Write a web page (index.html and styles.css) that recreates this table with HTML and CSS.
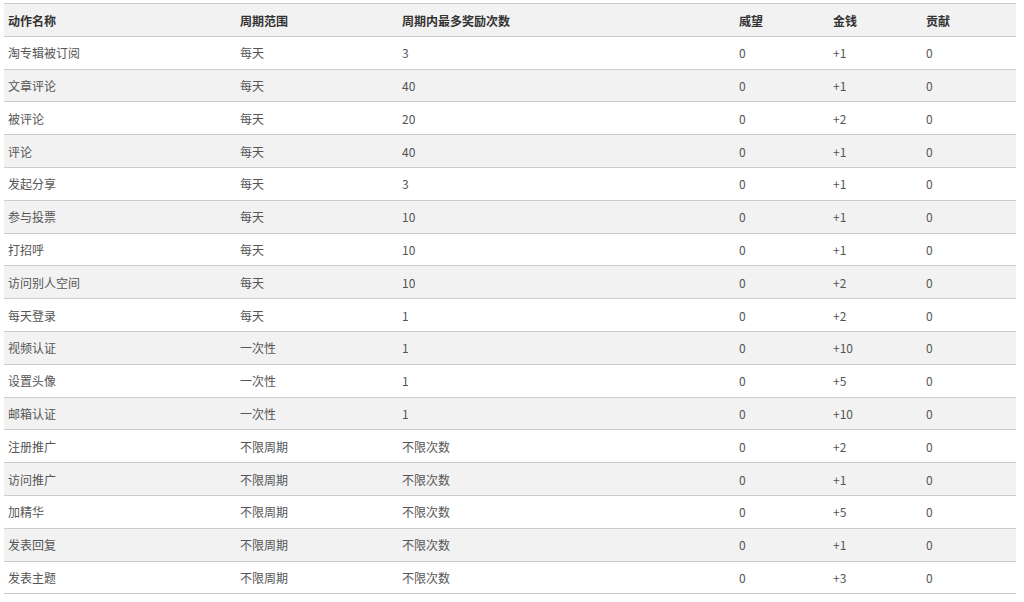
FILE: index.html
```html
<!DOCTYPE html>
<html lang="zh-CN">
<head>
<meta charset="utf-8">
<title>积分规则</title>
<link rel="stylesheet" href="styles.css">
</head>
<body>
<div class="wrap">
<table class="credits">
<colgroup>
<col class="c1"><col class="c2"><col class="c3"><col class="c4"><col class="c5"><col class="c6">
</colgroup>
<thead>
<tr><th>动作名称</th><th>周期范围</th><th>周期内最多奖励次数</th><th>威望</th><th>金钱</th><th>贡献</th></tr>
</thead>
<tbody>
<tr><td>淘专辑被订阅</td><td>每天</td><td>3</td><td>0</td><td>+1</td><td>0</td></tr>
<tr><td>文章评论</td><td>每天</td><td>40</td><td>0</td><td>+1</td><td>0</td></tr>
<tr><td>被评论</td><td>每天</td><td>20</td><td>0</td><td>+2</td><td>0</td></tr>
<tr><td>评论</td><td>每天</td><td>40</td><td>0</td><td>+1</td><td>0</td></tr>
<tr><td>发起分享</td><td>每天</td><td>3</td><td>0</td><td>+1</td><td>0</td></tr>
<tr><td>参与投票</td><td>每天</td><td>10</td><td>0</td><td>+1</td><td>0</td></tr>
<tr><td>打招呼</td><td>每天</td><td>10</td><td>0</td><td>+1</td><td>0</td></tr>
<tr><td>访问别人空间</td><td>每天</td><td>10</td><td>0</td><td>+2</td><td>0</td></tr>
<tr><td>每天登录</td><td>每天</td><td>1</td><td>0</td><td>+2</td><td>0</td></tr>
<tr><td>视频认证</td><td>一次性</td><td>1</td><td>0</td><td>+10</td><td>0</td></tr>
<tr><td>设置头像</td><td>一次性</td><td>1</td><td>0</td><td>+5</td><td>0</td></tr>
<tr><td>邮箱认证</td><td>一次性</td><td>1</td><td>0</td><td>+10</td><td>0</td></tr>
<tr><td>注册推广</td><td>不限周期</td><td>不限次数</td><td>0</td><td>+2</td><td>0</td></tr>
<tr><td>访问推广</td><td>不限周期</td><td>不限次数</td><td>0</td><td>+1</td><td>0</td></tr>
<tr><td>加精华</td><td>不限周期</td><td>不限次数</td><td>0</td><td>+5</td><td>0</td></tr>
<tr><td>发表回复</td><td>不限周期</td><td>不限次数</td><td>0</td><td>+1</td><td>0</td></tr>
<tr><td>发表主题</td><td>不限周期</td><td>不限次数</td><td>0</td><td>+3</td><td>0</td></tr>
</tbody>
</table>
</div>
</body>
</html>
```

FILE: styles.css
```css
html, body {
  margin: 0;
  padding: 0;
  background: #fff;
}
body {
  font-family: "Microsoft YaHei", "Noto Sans CJK SC", "Liberation Sans", sans-serif;
  font-size: 12px;
  color: #555;
}
.wrap {
  padding: 3px 8px 0 4px;
}
.credits {
  width: 1012px;
  border-collapse: collapse;
  table-layout: fixed;
}
.c1 { width: 232px; }
.c2 { width: 162px; }
.c3 { width: 337px; }
.c4 { width: 94px; }
.c5 { width: 93px; }
.c6 { width: 94px; }
.credits th,
.credits td {
  text-align: left;
  padding: 8.5px 4px 6.5px;
  line-height: 16.8px;
  border-bottom: 1px solid #ccc;
  white-space: nowrap;
}
.credits th {
  font-weight: bold;
  color: #333;
  background: #f2f2f2;
  border-top: 1px solid #ccc;
}
.credits tbody tr:nth-child(even) td {
  background: #f2f2f2;
}
```
